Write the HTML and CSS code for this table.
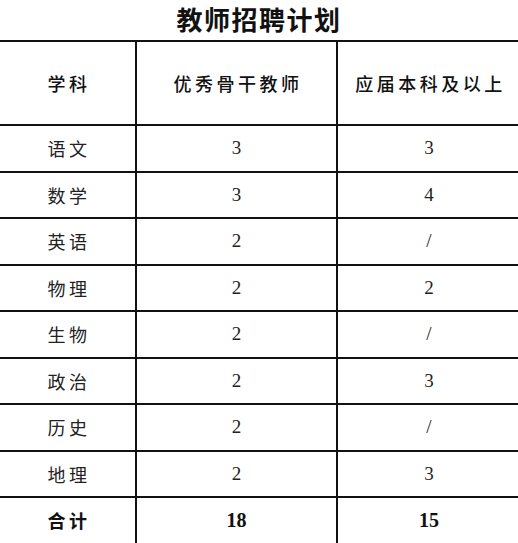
FILE: index.html
```html
<!DOCTYPE html>
<html lang="zh-CN">
<head>
<meta charset="utf-8">
<title>教师招聘计划</title>
<link rel="stylesheet" href="styles.css">
</head>
<body>
<div class="page">
  <h1 class="title">教师招聘计划</h1>
  <table class="plan">
    <colgroup>
      <col class="c1"><col class="c2"><col class="c3">
    </colgroup>
    <thead>
      <tr class="head">
        <th class="cjk">学科</th>
        <th class="cjk">优秀骨干教师</th>
        <th class="cjk">应届本科及以上</th>
      </tr>
    </thead>
    <tbody>
      <tr><td class="cjk">语文</td><td class="num">3</td><td class="num">3</td></tr>
      <tr><td class="cjk">数学</td><td class="num">3</td><td class="num">4</td></tr>
      <tr><td class="cjk">英语</td><td class="num">2</td><td class="num">/</td></tr>
      <tr><td class="cjk">物理</td><td class="num">2</td><td class="num">2</td></tr>
      <tr><td class="cjk">生物</td><td class="num">2</td><td class="num">/</td></tr>
      <tr><td class="cjk">政治</td><td class="num">2</td><td class="num">3</td></tr>
      <tr><td class="cjk">历史</td><td class="num">2</td><td class="num">/</td></tr>
      <tr><td class="cjk">地理</td><td class="num">2</td><td class="num">3</td></tr>
      <tr class="total"><td class="cjk">合计</td><td class="num">18</td><td class="num">15</td></tr>
    </tbody>
  </table>
</div>
</body>
</html>
```

FILE: styles.css
```css
html, body {
  margin: 0;
  padding: 0;
  background: #fff;
  overflow: hidden;
}

.page {
  width: 518px;
  height: 543px;
  overflow: hidden;
}

.title {
  margin: 0;
  height: 40px;
  line-height: 38px;
  text-align: center;
  font-family: "Noto Sans CJK SC", sans-serif;
  font-weight: 700;
  font-size: 26px;
  letter-spacing: 1.5px;
  color: #111;
}

.plan {
  width: 522px;
  margin-left: -2px;
  border-collapse: collapse;
  table-layout: fixed;
}

.c1 { width: 137px; }
.c2 { width: 201px; }
.c3 { width: 184px; }

.plan th,
.plan td {
  border: 2px solid #111;
  padding: 0;
  text-align: center;
  vertical-align: middle;
  height: 44.5px;
  color: #222;
}

.plan .head th {
  height: 82px;
  font-weight: 500;
  color: #111;
}

.cjk {
  font-family: "Noto Sans CJK SC", sans-serif;
  font-size: 18px;
  letter-spacing: 3.5px;
  text-indent: 3px;
}

.num {
  font-family: "Liberation Serif", serif;
  font-size: 19px;
}

.total td {
  font-weight: 700;
  color: #111;
}

.total .num {
  font-size: 20px;
}
```
